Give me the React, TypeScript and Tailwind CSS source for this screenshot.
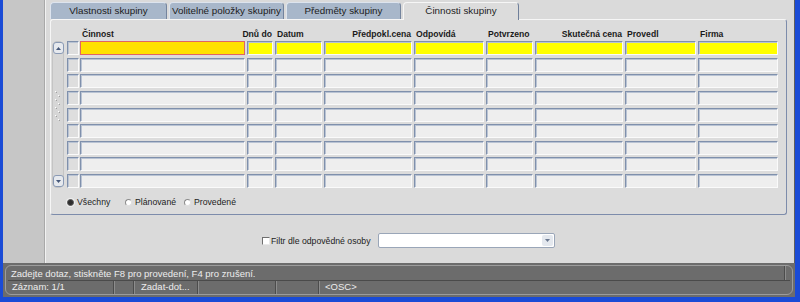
import React from "react";

const COLS = [
  { label: "Činnost", right: false },
  { label: "Dnů do", right: true },
  { label: "Datum", right: false },
  { label: "Předpokl.cena", right: true },
  { label: "Odpovídá", right: false },
  { label: "Potvrzeno", right: false },
  { label: "Skutečná cena", right: true },
  { label: "Provedl", right: false },
  { label: "Firma", right: false },
];

const GRID = "grid grid-cols-[165px_26px_47px_88px_70px_47px_88px_71px_80px] gap-x-[2px]";

// row top margins so rows land at 40, 57, 73, 90 ...
const ROW_MT = ["", "mt-[3px]", "mt-[2px]", "mt-[3px]", "mt-[3px]", "mt-[2px]", "mt-[3px]", "mt-[2px]", "mt-[3px]"];

const cellBase =
  "h-[14px] border border-t-[#7f90ac] border-l-[#7f90ac] border-b-[#fafafa] border-r-[#fafafa] shadow-[inset_1px_1px_0_#b9c3d3]";

function Tab({ label, active, width }: { label: string; active?: boolean; width: string }) {
  if (active) {
    return (
      <div className={`relative z-10 -mb-px h-[18px] ${width} rounded-t-[4px] border-l border-t border-r border-l-[#f6f6f6] border-t-[#f6f6f6] border-r-[#6f7f9a] bg-[#dcdcdc] text-center text-[9.8px] leading-[16px] text-[#1c1c1c]`}>
        {label}
      </div>
    );
  }
  return (
    <div className={`h-[17px] ${width} rounded-t-[4px] border-l border-t border-r border-l-[#dde4ee] border-t-[#dde4ee] border-r-[#74849e] bg-[#a8b7ca] text-center text-[9.8px] leading-[16px] text-[#1c1c1c]`}>
      {label}
    </div>
  );
}

function ScrollBar() {
  return (
    <div className="ml-px flex h-[147px] w-[12px] flex-col items-center rounded-[5px] border border-[#c4c4c4] bg-[#d6d6d6]">
      <div className="flex h-[12px] w-[11px] items-center justify-center rounded-[3px] border border-[#8a9ab5] bg-[#e6e9ee]">
        <svg width="5" height="3" viewBox="0 0 5 3">
          <path d="M0 3 L2.5 0 L5 3 Z" fill="#46587a" />
        </svg>
      </div>
      <div className="flex flex-1 items-center justify-center">
        <svg width="6" height="34" viewBox="0 0 6 34" className="mb-[14px]">
          {[0, 1, 2, 3, 4, 5, 6, 7].map((i) => (
            <g key={i}>
              <rect x={i % 2 ? 3 : 0} y={i * 4} width="1" height="1" fill="#ffffff" />
              <rect x={i % 2 ? 4 : 1} y={i * 4 + 1} width="1" height="1" fill="#a0a0a0" />
            </g>
          ))}
        </svg>
      </div>
      <div className="flex h-[12px] w-[11px] items-center justify-center rounded-[3px] border border-[#8a9ab5] bg-[#e6e9ee]">
        <svg width="5" height="3" viewBox="0 0 5 3">
          <path d="M0 0 L2.5 3 L5 0 Z" fill="#46587a" />
        </svg>
      </div>
    </div>
  );
}

function Radio({ label, checked, width }: { label: string; checked?: boolean; width: string }) {
  return (
    <div className={`flex items-center ${width}`}>
      <div
        className={
          checked
            ? "h-[7px] w-[7px] rounded-full border border-[#5a5a5a] bg-[#2e2e2e] shadow-[0_0_0_1px_#f0f0f0]"
            : "h-[7px] w-[7px] rounded-full border border-t-[#8a8a8a] border-l-[#8a8a8a] border-b-[#e0e0e0] border-r-[#e0e0e0] bg-white"
        }
      />
      <span className="ml-[3px] text-[8.7px] leading-[10px] text-[#1c1c1c]">{label}</span>
    </div>
  );
}

function Sep() {
  return <div className="h-full w-[2px] border-l border-r border-l-[#4c4c4c] border-r-[#8c8c8c]" />;
}

export default function App() {
  return (
    <div
      className="flex h-[302px] w-[800px] flex-col overflow-hidden bg-[#1a4bd6] pb-[5px] pl-[3px] pr-[5px]"
      style={{ fontFamily: '"Liberation Sans", Arial, sans-serif' }}
    >
      <div className="flex h-[263px]">
        <div className="w-[42px] border-r border-[#a9a9a9] bg-[#c6c6c6]" />
        <div className="flex-1 border-l border-r border-l-[#f2f2f2] border-r-[#5e5e5e] bg-[#dadada] pl-[4px] pt-[2px]">
          {/* tabs */}
          <div className="flex h-[17px] items-end gap-[2px]">
            <Tab label="Vlastnosti skupiny" width="w-[117px]" />
            <Tab label="Volitelné položky skupiny" width="w-[115px]" />
            <Tab label="Předměty skupiny" width="w-[115px]" />
            <Tab label="Činnosti skupiny" width="w-[116px]" active />
          </div>

          {/* panel */}
          <div className="h-[196px] w-[737px] rounded-[3px] border border-t-[#f6f6f6] border-l-[#f6f6f6] border-b-[#7d8cab] border-r-[#7d8cab] bg-[#dcdcdc] pt-[7px]">
            <div className="flex h-[14px] items-center pl-[29px]">
              <div className={GRID}>
                {COLS.map((c) => (
                  <div
                    key={c.label}
                    className={`flex whitespace-nowrap text-[8.6px] font-bold leading-[14px] text-[#1a1a1a] ${
                      c.right ? "justify-end pr-px" : "pl-[2px]"
                    }`}
                  >
                    <span className={c.right ? "shrink-0" : ""}>{c.label}</span>
                  </div>
                ))}
              </div>
            </div>

            <div className="flex">
              <ScrollBar />
              <div className="ml-[3px] flex flex-col">
                {ROW_MT.map((mt, r) => (
                  <div key={r} className={`flex ${mt}`}>
                    <div className={`${cellBase} w-[12px] bg-[#dedede]`} />
                    <div className={`ml-px ${GRID}`}>
                      {COLS.map((c, i) => {
                        if (r === 0 && i === 0)
                          return <div key={i} className="h-[14px] border border-[#e06464] bg-[#ffe100]" />;
                        return (
                          <div key={i} className={`${cellBase} ${r === 0 ? "bg-[#ffff00]" : "bg-[#eeeeee]"}`} />
                        );
                      })}
                    </div>
                  </div>
                ))}
              </div>
            </div>

            <div className="mt-[9px] flex h-[10px] items-center pl-[16px]">
              <Radio label="Všechny" checked width="w-[58px]" />
              <Radio label="Plánované" width="w-[59px]" />
              <Radio label="Provedené" width="w-[70px]" />
            </div>
          </div>

          {/* filter */}
          <div className="mt-[18px] flex h-[15px] items-center pl-[212px]">
            <div className="h-[8px] w-[8px] border border-t-[#6f6f6f] border-l-[#6f6f6f] border-b-[#e8e8e8] border-r-[#e8e8e8] bg-white" />
            <span className="ml-[1px] w-[107px] whitespace-nowrap text-[8.7px] leading-[10px] text-[#1c1c1c]">
              Filtr dle odpovědné osoby
            </span>
            <div className="flex h-[15px] w-[177px] items-center justify-end rounded-[2px] border border-[#9aa6b8] bg-white pr-px">
              <div className="flex h-[11px] w-[11px] items-center justify-center rounded-[2px] bg-[#e4e8ee]">
                <svg width="5" height="3" viewBox="0 0 5 3">
                  <path d="M0 0 L2.5 3 L5 0 Z" fill="#6a7890" />
                </svg>
              </div>
            </div>
          </div>
        </div>
      </div>

      {/* status bar */}
      <div className="h-[34px] bg-[#6c6c6c] p-[2px] text-[9.5px] text-[#ececec]">
        <div className="flex h-full flex-col rounded-[6px] border border-[#9c9c9c]">
          <div className="mx-[2px] flex h-[15px] border-b border-[#4a4a4a]">
            <div className="flex-1 pl-[3px] leading-[15px]">Zadejte dotaz, stiskněte F8 pro provedení, F4 pro zrušení.</div>
            <div className="mr-[4px] h-[14px] w-[2px] border-l border-r border-l-[#4c4c4c] border-r-[#8c8c8c]" />
          </div>
          <div className="flex h-[13px] leading-[12px]">
            <div className="w-[107px] pl-[6px]">Záznam: 1/1</div>
            <Sep />
            <div className="w-[18px]" />
            <Sep />
            <div className="w-[62px] pl-[6px]">Zadat-dot...</div>
            <Sep />
            <div className="w-[76px]" />
            <Sep />
            <div className="w-[41px]" />
            <Sep />
            <div className="flex-1 pl-[5px]">&lt;OSC&gt;</div>
          </div>
        </div>
      </div>
    </div>
  );
}
